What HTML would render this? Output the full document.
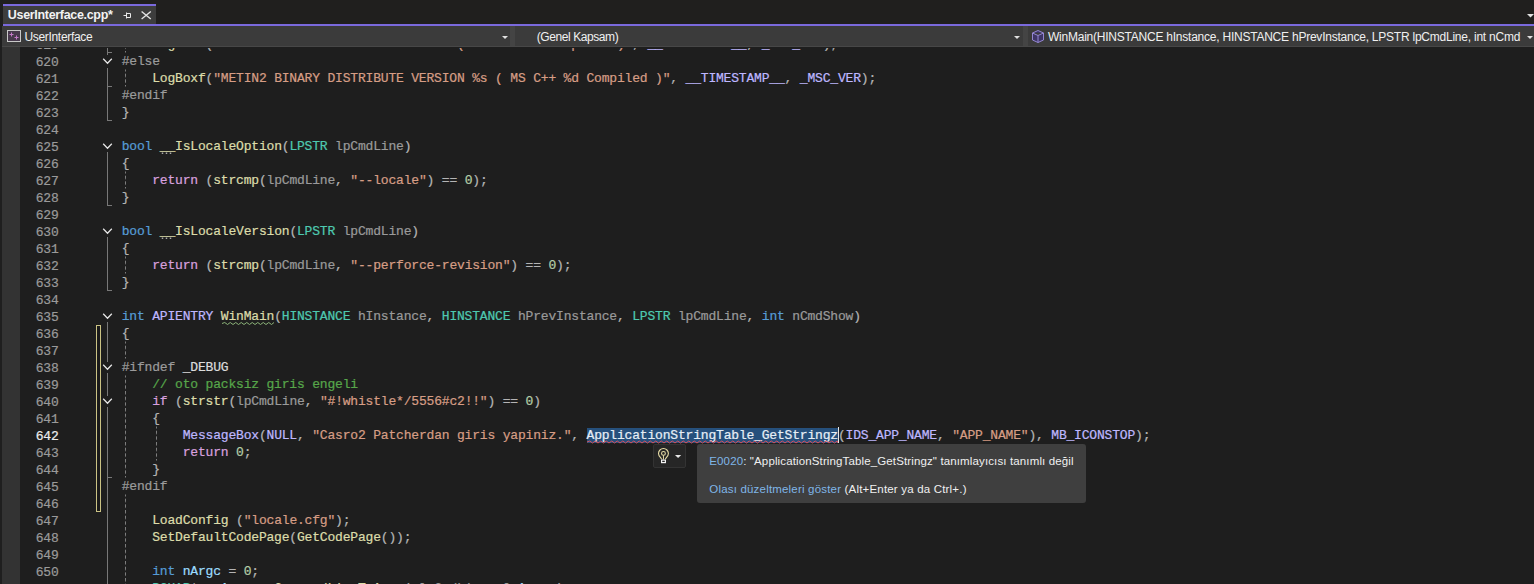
<!DOCTYPE html><html><head><meta charset="utf-8"><style>
*{margin:0;padding:0;box-sizing:border-box}
html,body{width:1534px;height:584px;overflow:hidden;background:#1e1e1e}
body{position:relative;font-family:"Liberation Sans",sans-serif}
#tabrow{position:absolute;left:0;top:0;width:1534px;height:24px;background:#201f1e}
#tab{position:absolute;left:3px;top:4px;width:153px;height:20px;background:#3d3d3d;border-top:2px solid #7a69dc}
#tabtxt{position:absolute;left:4.8px;top:1.5px;font-size:12.5px;font-weight:bold;color:#f2f2f2;white-space:nowrap;letter-spacing:-0.317px}
#accent{position:absolute;left:3px;top:24px;width:1531px;height:2px;background:#7a69dc}
#nav{position:absolute;left:2px;top:26px;width:1532px;height:21px;background:#3b3b3b;border-bottom:1px solid #474747}
.navtxt{position:absolute;top:3.5px;font-size:12px;color:#f0f0f0;white-space:nowrap}
.sep{position:absolute;top:0;width:5px;height:20px;background:#444444}
.arr{position:absolute;width:0;height:0;border-left:3.5px solid transparent;border-right:3.5px solid transparent;border-top:3.5px solid #e0e0e0}
#gm{position:absolute;left:2px;top:47px;width:18px;height:537px;background:#333333}
#leftstrip{position:absolute;left:0;top:0;width:2px;height:584px;background:#1f1f1f}
#codewrap{position:absolute;left:0;top:48px;width:1534px;height:536px;overflow:hidden}
#codeinner{position:absolute;left:0;top:-48px;width:1534px;height:584px}
.ln{position:absolute;left:121.75px;height:17px;line-height:17px;font-family:"Liberation Mono",monospace;font-size:13px;letter-spacing:-0.1833px;white-space:pre;color:#DCDCDC;-webkit-text-stroke:0.22px currentColor}
.num{position:absolute;left:0;width:58.6px;text-align:right;height:17px;line-height:17px;font-family:"Liberation Mono",monospace;font-size:13px;letter-spacing:-0.1833px;color:#9a9a9a;white-space:pre;-webkit-text-stroke:0.22px currentColor}
.num.cur{color:#ececec}
.sel{background:#26507c;color:#e6eef6}
#svg{position:absolute;left:0;top:0}
#bulb{position:absolute;left:653px;top:444px;width:33px;height:24px;background:#262626;border:1px solid #333;border-radius:2px}
#tip{position:absolute;left:697px;top:444px;width:389px;height:59px;background:#3f3f3f;border-radius:3px}
.tt{position:absolute;left:12.3px;font-size:11.5px;color:#f0f0f0;white-space:nowrap}
.lnk{color:#7fb6e8}
</style></head><body>
<div id="gm"></div>
<div id="codewrap"><div id="codeinner">
<div class="num" style="top:36.5px">619</div><div class="num" style="top:53.5px">620</div><div class="num" style="top:70.5px">621</div><div class="num" style="top:87.5px">622</div><div class="num" style="top:104.5px">623</div><div class="num" style="top:121.5px">624</div><div class="num" style="top:138.5px">625</div><div class="num" style="top:155.5px">626</div><div class="num" style="top:172.5px">627</div><div class="num" style="top:189.5px">628</div><div class="num" style="top:206.5px">629</div><div class="num" style="top:223.5px">630</div><div class="num" style="top:240.5px">631</div><div class="num" style="top:257.5px">632</div><div class="num" style="top:274.5px">633</div><div class="num" style="top:291.5px">634</div><div class="num" style="top:308.5px">635</div><div class="num" style="top:325.5px">636</div><div class="num" style="top:342.5px">637</div><div class="num" style="top:359.5px">638</div><div class="num" style="top:376.5px">639</div><div class="num" style="top:393.5px">640</div><div class="num" style="top:410.5px">641</div><div class="num cur" style="top:427.5px">642</div><div class="num" style="top:444.5px">643</div><div class="num" style="top:461.5px">644</div><div class="num" style="top:478.5px">645</div><div class="num" style="top:495.5px">646</div><div class="num" style="top:512.5px">647</div><div class="num" style="top:529.5px">648</div><div class="num" style="top:546.5px">649</div><div class="num" style="top:563.5px">650</div><div class="num" style="top:580.5px">651</div>
<div class="ln" style="top:35.5px">    <span style="color:#DCDCAA">LogBoxf</span><span style="color:#B4B4B4">(</span><span style="color:#D69D85">&quot;METIN2 BINARY DEBUG VERSION %s ( MS C++ %d Compiled )&quot;</span><span style="color:#B4B4B4">, </span><span style="color:#BEB7FF">__TIMESTAMP__</span><span style="color:#B4B4B4">, </span><span style="color:#BEB7FF">_MSC_VER</span><span style="color:#B4B4B4">);</span></div><div class="ln" style="top:52.5px"><span style="color:#9B9B9B">#else</span></div><div class="ln" style="top:69.5px">    <span style="color:#DCDCAA">LogBoxf</span><span style="color:#B4B4B4">(</span><span style="color:#D69D85">&quot;METIN2 BINARY DISTRIBUTE VERSION %s ( MS C++ %d Compiled )&quot;</span><span style="color:#B4B4B4">, </span><span style="color:#BEB7FF">__TIMESTAMP__</span><span style="color:#B4B4B4">, </span><span style="color:#BEB7FF">_MSC_VER</span><span style="color:#B4B4B4">);</span></div><div class="ln" style="top:86.5px"><span style="color:#9B9B9B">#endif</span></div><div class="ln" style="top:103.5px"><span style="color:#B4B4B4">}</span></div><div class="ln" style="top:120.5px"></div><div class="ln" style="top:137.5px"><span style="color:#569CD6">bool</span> <span style="color:#DCDCAA">__IsLocaleOption</span><span style="color:#B4B4B4">(</span><span style="color:#4EC9B0">LPSTR</span> <span style="color:#9A9A9A">lpCmdLine</span><span style="color:#B4B4B4">)</span></div><div class="ln" style="top:154.5px"><span style="color:#B4B4B4">{</span></div><div class="ln" style="top:171.5px">    <span style="color:#D8A0DF">return</span><span style="color:#B4B4B4"> (</span><span style="color:#DCDCAA">strcmp</span><span style="color:#B4B4B4">(</span><span style="color:#9A9A9A">lpCmdLine</span><span style="color:#B4B4B4">, </span><span style="color:#D69D85">&quot;--locale&quot;</span><span style="color:#B4B4B4">) == </span><span style="color:#B5CEA8">0</span><span style="color:#B4B4B4">);</span></div><div class="ln" style="top:188.5px"><span style="color:#B4B4B4">}</span></div><div class="ln" style="top:205.5px"></div><div class="ln" style="top:222.5px"><span style="color:#569CD6">bool</span> <span style="color:#DCDCAA">__IsLocaleVersion</span><span style="color:#B4B4B4">(</span><span style="color:#4EC9B0">LPSTR</span> <span style="color:#9A9A9A">lpCmdLine</span><span style="color:#B4B4B4">)</span></div><div class="ln" style="top:239.5px"><span style="color:#B4B4B4">{</span></div><div class="ln" style="top:256.5px">    <span style="color:#D8A0DF">return</span><span style="color:#B4B4B4"> (</span><span style="color:#DCDCAA">strcmp</span><span style="color:#B4B4B4">(</span><span style="color:#9A9A9A">lpCmdLine</span><span style="color:#B4B4B4">, </span><span style="color:#D69D85">&quot;--perforce-revision&quot;</span><span style="color:#B4B4B4">) == </span><span style="color:#B5CEA8">0</span><span style="color:#B4B4B4">);</span></div><div class="ln" style="top:273.5px"><span style="color:#B4B4B4">}</span></div><div class="ln" style="top:290.5px"></div><div class="ln" style="top:307.5px"><span style="color:#569CD6">int</span> <span style="color:#BEB7FF">APIENTRY</span> <span style="color:#DCDCAA">WinMain</span><span style="color:#B4B4B4">(</span><span style="color:#4EC9B0">HINSTANCE</span> <span style="color:#9A9A9A">hInstance</span><span style="color:#B4B4B4">, </span><span style="color:#4EC9B0">HINSTANCE</span> <span style="color:#9A9A9A">hPrevInstance</span><span style="color:#B4B4B4">, </span><span style="color:#4EC9B0">LPSTR</span> <span style="color:#9A9A9A">lpCmdLine</span><span style="color:#B4B4B4">, </span><span style="color:#569CD6">int</span> <span style="color:#9A9A9A">nCmdShow</span><span style="color:#B4B4B4">)</span></div><div class="ln" style="top:324.5px"><span style="color:#B4B4B4">{</span></div><div class="ln" style="top:341.5px"></div><div class="ln" style="top:358.5px"><span style="color:#9B9B9B">#ifndef</span> <span style="color:#DCDCDC">_DEBUG</span></div><div class="ln" style="top:375.5px">    <span style="color:#57A64A">// oto packsiz giris engeli</span></div><div class="ln" style="top:392.5px">    <span style="color:#D8A0DF">if</span><span style="color:#B4B4B4"> (</span><span style="color:#DCDCAA">strstr</span><span style="color:#B4B4B4">(</span><span style="color:#9A9A9A">lpCmdLine</span><span style="color:#B4B4B4">, </span><span style="color:#D69D85">&quot;#!whistle*/5556#c2!!&quot;</span><span style="color:#B4B4B4">) == </span><span style="color:#B5CEA8">0</span><span style="color:#B4B4B4">)</span></div><div class="ln" style="top:409.5px">    <span style="color:#B4B4B4">{</span></div><div class="ln" style="top:426.5px">        <span style="color:#BEB7FF">MessageBox</span><span style="color:#B4B4B4">(</span><span style="color:#BEB7FF">NULL</span><span style="color:#B4B4B4">, </span><span style="color:#D69D85">&quot;Casro2 Patcherdan giris yapiniz.&quot;</span><span style="color:#B4B4B4">, </span><span class="sel">ApplicationStringTable_GetStringz</span><span style="color:#B4B4B4">(</span><span style="color:#BEB7FF">IDS_APP_NAME</span><span style="color:#B4B4B4">, </span><span style="color:#D69D85">&quot;APP_NAME&quot;</span><span style="color:#B4B4B4">), </span><span style="color:#BEB7FF">MB_ICONSTOP</span><span style="color:#B4B4B4">);</span></div><div class="ln" style="top:443.5px">        <span style="color:#D8A0DF">return</span> <span style="color:#B5CEA8">0</span><span style="color:#B4B4B4">;</span></div><div class="ln" style="top:460.5px">    <span style="color:#B4B4B4">}</span></div><div class="ln" style="top:477.5px"><span style="color:#9B9B9B">#endif</span></div><div class="ln" style="top:494.5px"></div><div class="ln" style="top:511.5px">    <span style="color:#DCDCAA">LoadConfig</span><span style="color:#B4B4B4"> (</span><span style="color:#D69D85">&quot;locale.cfg&quot;</span><span style="color:#B4B4B4">);</span></div><div class="ln" style="top:528.5px">    <span style="color:#DCDCAA">SetDefaultCodePage</span><span style="color:#B4B4B4">(</span><span style="color:#DCDCAA">GetCodePage</span><span style="color:#B4B4B4">());</span></div><div class="ln" style="top:545.5px"></div><div class="ln" style="top:562.5px">    <span style="color:#569CD6">int</span> <span style="color:#9CDCFE">nArgc</span><span style="color:#B4B4B4"> = </span><span style="color:#B5CEA8">0</span><span style="color:#B4B4B4">;</span></div><div class="ln" style="top:579.5px">    <span style="color:#4EC9B0">PCHAR</span><span style="color:#B4B4B4">* </span><span style="color:#9CDCFE">szArgv</span><span style="color:#B4B4B4"> = </span><span style="color:#DCDCAA">CommandLineToArgv</span><span style="color:#B4B4B4">( </span><span style="color:#9A9A9A">lpCmdLine</span><span style="color:#B4B4B4">, &amp;</span><span style="color:#9CDCFE">nArgc</span><span style="color:#B4B4B4"> );</span></div>
<svg id="svg" width="1534" height="584"><defs><pattern id="dash" x="0" y="0" width="1" height="5.667" patternUnits="userSpaceOnUse"><rect x="0" y="0" width="1" height="3.4" fill="#7e7e7e"/></pattern></defs><rect x="107" y="47" width="1" height="8" fill="#787878"/><rect x="107" y="52" width="5" height="1" fill="#787878"/><path d="M103.2 58.8 L107.5 63.3 L111.8 58.8" fill="none" stroke="#e6e6e6" stroke-width="1.25"/><rect x="107" y="68" width="1" height="53" fill="#787878"/><rect x="107" y="86" width="5" height="1" fill="#787878"/><rect x="107" y="120" width="5" height="1" fill="#787878"/><path d="M103.2 143.8 L107.5 148.3 L111.8 143.8" fill="none" stroke="#e6e6e6" stroke-width="1.25"/><rect x="107" y="152" width="1" height="54" fill="#787878"/><rect x="107" y="205" width="5" height="1" fill="#787878"/><path d="M103.2 228.8 L107.5 233.3 L111.8 228.8" fill="none" stroke="#e6e6e6" stroke-width="1.25"/><rect x="107" y="237" width="1" height="54" fill="#787878"/><rect x="107" y="290" width="5" height="1" fill="#787878"/><path d="M103.2 313.8 L107.5 318.3 L111.8 313.8" fill="none" stroke="#e6e6e6" stroke-width="1.25"/><rect x="107" y="322" width="1" height="40" fill="#787878"/><path d="M103.2 364.8 L107.5 369.3 L111.8 364.8" fill="none" stroke="#e6e6e6" stroke-width="1.25"/><rect x="107" y="373" width="1" height="23" fill="#787878"/><path d="M103.2 398.8 L107.5 403.3 L111.8 398.8" fill="none" stroke="#e6e6e6" stroke-width="1.25"/><rect x="107" y="407" width="1" height="177" fill="#787878"/><rect x="107" y="477" width="5" height="1" fill="#787878"/><rect x="125" y="35.5" width="1" height="17.0" fill="url(#dash)"/><rect x="125" y="69.5" width="1" height="17.0" fill="url(#dash)"/><rect x="125" y="171.5" width="1" height="17.0" fill="url(#dash)"/><rect x="125" y="256.5" width="1" height="17.0" fill="url(#dash)"/><rect x="125" y="341.5" width="1" height="17.0" fill="url(#dash)"/><rect x="125" y="375.5" width="1" height="102.0" fill="url(#dash)"/><rect x="125" y="494.5" width="1" height="102.0" fill="url(#dash)"/><rect x="156" y="426.5" width="1" height="34.0" fill="url(#dash)"/><rect x="96.5" y="325.5" width="4" height="186" fill="#1a1a1a" stroke="#cbc384" stroke-width="1"/><path d="M222 323.5 L224.75 322.5 L227.50 324.5 L230.25 322.5 L233.00 324.5 L235.75 322.5 L238.50 324.5 L241.25 322.5 L244.00 324.5 L246.75 322.5 L249.50 324.5 L252.25 322.5 L255.00 324.5 L257.75 322.5 L260.50 324.5 L263.25 322.5 L266.00 324.5 L268.75 322.5 L271.50 324.5 L274.00 322.5" fill="none" stroke="#8db57a" stroke-width="1"/><path d="M587 442 L589.75 441.0 L592.50 443.0 L595.25 441.0 L598.00 443.0 L600.75 441.0 L603.50 443.0 L606.25 441.0 L609.00 443.0 L611.75 441.0 L614.50 443.0 L617.25 441.0 L620.00 443.0 L622.75 441.0 L625.50 443.0 L628.25 441.0 L631.00 443.0 L633.75 441.0 L636.50 443.0 L639.25 441.0 L642.00 443.0 L644.75 441.0 L647.50 443.0 L650.25 441.0 L653.00 443.0 L655.75 441.0 L658.50 443.0 L661.25 441.0 L664.00 443.0 L666.75 441.0 L669.50 443.0 L672.25 441.0 L675.00 443.0 L677.75 441.0 L680.50 443.0 L683.25 441.0 L686.00 443.0 L688.75 441.0 L691.50 443.0 L694.25 441.0 L697.00 443.0 L699.75 441.0 L702.50 443.0 L705.25 441.0 L708.00 443.0 L710.75 441.0 L713.50 443.0 L716.25 441.0 L719.00 443.0 L721.75 441.0 L724.50 443.0 L727.25 441.0 L730.00 443.0 L732.75 441.0 L735.50 443.0 L738.25 441.0 L741.00 443.0 L743.75 441.0 L746.50 443.0 L749.25 441.0 L752.00 443.0 L754.75 441.0 L757.50 443.0 L760.25 441.0 L763.00 443.0 L765.75 441.0 L768.50 443.0 L771.25 441.0 L774.00 443.0 L776.75 441.0 L779.50 443.0 L782.25 441.0 L785.00 443.0 L787.75 441.0 L790.50 443.0 L793.25 441.0 L796.00 443.0 L798.75 441.0 L801.50 443.0 L804.25 441.0 L807.00 443.0 L809.75 441.0 L812.50 443.0 L815.25 441.0 L818.00 443.0 L820.75 441.0 L823.50 443.0 L826.25 441.0 L829.00 443.0 L831.75 441.0 L834.50 443.0 L837.25 441.0 L838.00 443.0" fill="none" stroke="#d9525f" stroke-width="1"/><rect x="161.75" y="152.5" width="1.5" height="1.5" fill="#a8a8a8"/><rect x="165.75" y="152.5" width="1.5" height="1.5" fill="#a8a8a8"/><rect x="169.75" y="152.5" width="1.5" height="1.5" fill="#a8a8a8"/><rect x="161.75" y="237.5" width="1.5" height="1.5" fill="#a8a8a8"/><rect x="165.75" y="237.5" width="1.5" height="1.5" fill="#a8a8a8"/><rect x="169.75" y="237.5" width="1.5" height="1.5" fill="#a8a8a8"/><rect x="838" y="427" width="1" height="16" fill="#e8e8e8"/></svg>
</div></div>
<div id="tabrow"></div>
<div id="tab"><div id="tabtxt">UserInterface.cpp*</div></div>
<div id="accent"></div>
<div id="nav">
  <div class="navtxt" style="left:22.4px;letter-spacing:-0.313px">UserInterface</div>
  <div class="arr" style="left:500.4px;top:10px"></div>
  <div class="sep" style="left:508px"></div>
  <div class="navtxt" style="left:534.8px;letter-spacing:-0.421px">(Genel Kapsam)</div>
  <div class="arr" style="left:1012.3px;top:10px"></div>
  <div class="sep" style="left:1021px"></div>
  <div class="navtxt" style="left:1046px;letter-spacing:-0.231px">WinMain(HINSTANCE hInstance, HINSTANCE hPrevInstance, LPSTR lpCmdLine, int nCmd</div>
  <div class="arr" style="left:1524.5px;top:10px"></div>
</div>

<svg width="1534" height="47" style="position:absolute;left:0;top:0">
 <!-- tab pin -->
 <path d="M123.5 15.5 H126.5 M126.5 12.5 V18.5 M126.5 13.5 H130.5 V17.5 H126.5" fill="none" stroke="#e8e8e8" stroke-width="1"/>
 <!-- close X -->
 <path d="M141.6 11.4 L150.8 19.1 M150.8 11.4 L141.6 19.1" fill="none" stroke="#e4e4e4" stroke-width="1.35"/>
 <!-- top right arrow -->
 <path d="M1527 14 L1534 14 L1530.5 17.5 Z" fill="#e0e0e0"/>
 <!-- nav icon: class icon -->
 <rect x="7.5" y="30.5" width="13" height="11" fill="#47394c" stroke="#c8c8c8" stroke-width="1"/>
 <path d="M9.5 34.5 H13.5 M11.5 32.5 V36.5 M14.5 37.5 H18.5 M16.5 35.5 V39.5" stroke="#c47ac8" stroke-width="1" fill="none"/>
 <!-- cube icon -->
 <path d="M1038 30.5 L1043.5 33 L1043.5 40 L1038 42.5 L1032.5 40 L1032.5 33 Z M1032.5 33 L1038 35.5 L1043.5 33 M1038 35.5 V42.5" fill="#3e3566" stroke="#9d8fe0" stroke-width="0.9" stroke-linejoin="round"/>
</svg>

<div id="leftstrip"></div>
<div id="bulb">
 <svg width="33" height="24" style="position:absolute;left:-1px;top:-1px">
  <path d="M8.5 15.3 C8.5 13.7 5.5 12.6 5.5 9.5 A4.95 4.95 0 0 1 15.4 9.5 C15.4 12.6 12.4 13.7 12.4 15.3" fill="none" stroke="#e6dca6" stroke-width="1.1"/>
  <circle cx="10.45" cy="9.4" r="1.9" fill="none" stroke="#e6dca6" stroke-width="1.05"/>
  <path d="M10.45 11.3 V15.6" stroke="#e6dca6" stroke-width="1"/>
  <rect x="8.6" y="16.1" width="3.8" height="2.5" fill="none" stroke="#f2f2f2" stroke-width="1.2"/>
  <path d="M22 11 L28.2 11 L25.1 14 Z" fill="#e8e8e8"/>
 </svg>
</div>
<div id="tip">
  <div class="tt" style="top:11px;letter-spacing:0.13px"><span class="lnk">E0020</span>: "ApplicationStringTable_GetStringz" tanımlayıcısı tanımlı değil</div>
  <div class="tt" style="top:39px;letter-spacing:0.187px"><span class="lnk">Olası düzeltmeleri göster</span> (Alt+Enter ya da Ctrl+.)</div>
</div>
</body></html>
